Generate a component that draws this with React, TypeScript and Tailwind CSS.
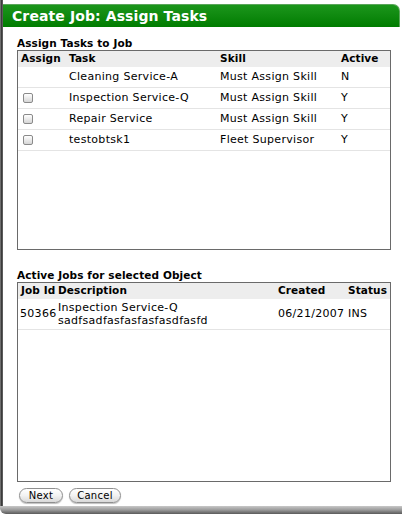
import React from 'react';

const tasks = [
  { task: 'Cleaning Service-A', skill: 'Must Assign Skill', active: 'N', box: false },
  { task: 'Inspection Service-Q', skill: 'Must Assign Skill', active: 'Y', box: true },
  { task: 'Repair Service', skill: 'Must Assign Skill', active: 'Y', box: true },
  { task: 'testobtsk1', skill: 'Fleet Supervisor', active: 'Y', box: true },
];

const Check = () => (
  <span className="inline-block w-[10px] h-[10px] rounded-[2px] border border-[#8a8a8a] bg-gradient-to-b from-white to-[#d6d6d6]" />
);

const Btn = ({ label, w }: { label: string; w: string }) => (
  <button
    className={`${w} h-[15px] rounded-full border border-[#8f8f8f] bg-gradient-to-b from-white via-[#f2f2f2] to-[#d9d9d9] text-[10px] leading-[13px] text-black shadow-[0_1px_1px_rgba(0,0,0,0.25)]`}
  >
    {label}
  </button>
);

export default function App() {
  return (
    <div
      className="w-[402px] h-[514px] bg-white flex flex-col overflow-hidden text-[11px] tracking-[0.3px] text-black"
      style={{ fontFamily: '"DejaVu Sans", Verdana, sans-serif' }}
    >
      <div className="flex flex-1 min-h-0">
        <div className="w-[3px] bg-gradient-to-r from-[#8a8a8a] via-[#3c3c3c] to-[#6a6a6a]" />
        <div className="flex-1 flex flex-col pt-[4px] pr-[2px]">
          <div className="h-[23px] bg-gradient-to-b from-[#1b961b] to-[#007c00] rounded-tr-[7px] border-t border-r border-[#5aa65a] flex items-center pl-[9px]">
            <span className="text-white font-bold text-[14px] tracking-[0.1px]">Create Job: Assign Tasks</span>
          </div>

          <div className="pl-[14px] pr-[9px] pt-[10px] flex flex-col">
            <div className="font-bold text-[10.5px] leading-[13px] tracking-[0.1px]">Assign Tasks to Job</div>
            <div className="h-[200px] border-[1.5px] border-[#6a6a6a]">
              <div className="flex h-[16px] items-center bg-[#ededed] font-bold text-[10.5px] tracking-[0.1px]">
                <div className="w-[51px] pl-[3px]">Assign</div>
                <div className="w-[151px]">Task</div>
                <div className="w-[121px]">Skill</div>
                <div className="flex-1">Active</div>
              </div>
              {tasks.map((t) => (
                <div key={t.task} className="flex h-[21px] items-center border-b border-[#e4e4e4]">
                  <div className="w-[51px] pl-[5px] flex items-center">{t.box && <Check />}</div>
                  <div className="w-[151px]">{t.task}</div>
                  <div className="w-[121px]">{t.skill}</div>
                  <div className="flex-1">{t.active}</div>
                </div>
              ))}
            </div>

            <div className="font-bold text-[10.5px] leading-[13px] tracking-[0.1px] mt-[19px]">Active Jobs for selected Object</div>
            <div className="h-[200px] border-[1.5px] border-[#6a6a6a]">
              <div className="flex h-[16px] items-center bg-[#ededed] font-bold text-[10.5px] tracking-[0.1px]">
                <div className="w-[40px] pl-[3px]">Job Id</div>
                <div className="w-[220px]">Description</div>
                <div className="w-[70px]">Created</div>
                <div className="flex-1">Status</div>
              </div>
              <div className="flex h-[31px] items-center border-b border-[#e4e4e4]">
                <div className="w-[40px] pl-[2px]">50366</div>
                <div className="w-[220px] leading-[13px]">
                  <div>Inspection Service-Q</div>
                  <div>sadfsadfasfasfasfasdfasfd</div>
                </div>
                <div className="w-[70px] whitespace-nowrap">06/21/2007</div>
                <div className="flex-1">INS</div>
              </div>
            </div>

            <div className="flex gap-[6px] mt-[6px] pl-[2px]">
              <Btn label="Next" w="w-[44px]" />
              <Btn label="Cancel" w="w-[52px]" />
            </div>
          </div>
        </div>
      </div>
      <div className="h-[8px] bg-gradient-to-b from-[#c8c8c8] via-[#9a9a9a] to-[#5a5a5a] rounded-bl-[6px]" />
    </div>
  );
}
